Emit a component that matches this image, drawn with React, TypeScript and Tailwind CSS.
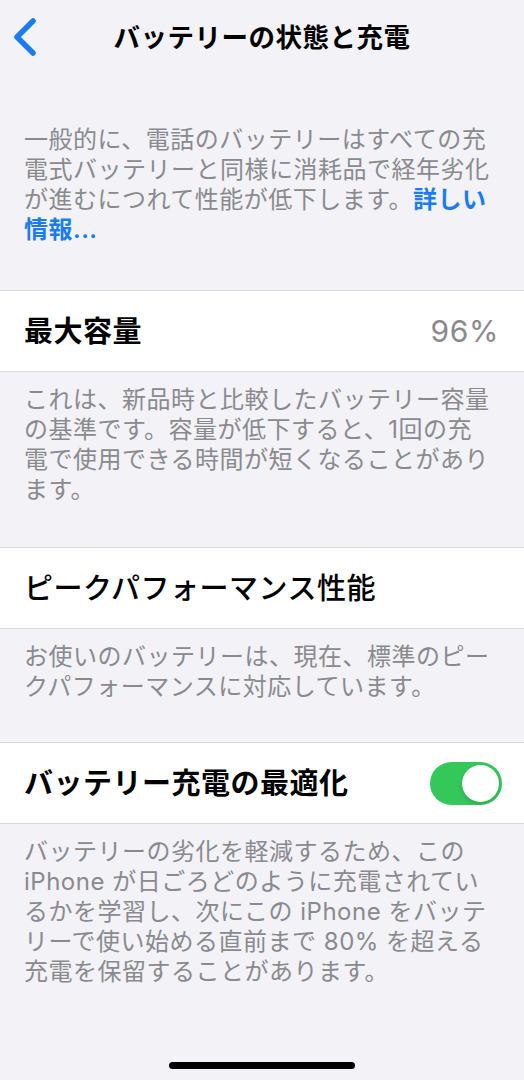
import React from "react";

const JP = { fontFamily: '"Inter", "Noto Sans CJK JP", sans-serif' };

function Row({ label, weight, right }: { label: string; weight: string; right?: React.ReactNode }) {
  return (
    <div className="flex h-[82px] items-center justify-between border-y border-[#d9d9de] bg-white pl-6 pr-[22px]">
      <span className={`text-[29px] leading-none tracking-[0.5px] text-black ${weight}`}>{label}</span>
      {right}
    </div>
  );
}

function Footer({ children, pb }: { children: React.ReactNode; pb: string }) {
  return (
    <div className={`pl-6 pr-[30px] pt-[13px] ${pb}`}>
      <p className="text-[24px] leading-[30px] tracking-[0.5px] text-[#8a8a8e]">{children}</p>
    </div>
  );
}

export default function App() {
  return (
    <div className="flex h-[1080px] w-[524px] flex-col overflow-hidden bg-[#f2f2f7]" style={JP}>
      <div className="grid h-[74px] grid-cols-[1fr_auto_1fr] items-center">
        <div className="flex items-center pl-[12px]">
          <svg width="26" height="38" viewBox="0 0 26 38" fill="none">
            <polyline
              points="21,3 5,19 21,35"
              stroke="#1a7cf2"
              strokeWidth="5.5"
              strokeLinecap="round"
              strokeLinejoin="round"
            />
          </svg>
        </div>
        <h1 className="text-[26.5px] font-bold leading-none tracking-[0.5px] text-black">バッテリーの状態と充電</h1>
        <div />
      </div>

      <div className="pl-6 pr-[30px] pt-[51px] pb-[45px]">
        <p className="text-[24px] leading-[30px] tracking-[0.5px] text-[#8a8a8e]">
          一般的に、電話のバッテリーはすべての充電式バッテリーと同様に消耗品で経年劣化が進むにつれて性能が低下します。
          <span className="font-semibold text-[#1a7cf2]">詳しい情報...</span>
        </p>
      </div>

      <Row
        label="最大容量"
        weight="font-semibold"
        right={<span className="pr-[3px] text-[30px] leading-none tracking-[0.6px] text-[#8a8a8e]">96%</span>}
      />
      <Footer pb="pb-[42px]">
        これは、新品時と比較したバッテリー容量の基準です。容量が低下すると、1回の充電で使用できる時間が短くなることがあります。
      </Footer>

      <Row label="ピークパフォーマンス性能" weight="font-medium" />
      <Footer pb="pb-[40px]">
        お使いのバッテリーは、現在、標準のピークパフォーマンスに対応しています。
      </Footer>

      <Row
        label="バッテリー充電の最適化"
        weight="font-semibold"
        right={
          <div className="flex h-[43px] w-[72px] items-center justify-end rounded-full bg-[#34c759] p-[3px]">
            <div className="h-[37px] w-[37px] rounded-full bg-white shadow-[0_2px_4px_rgba(0,0,0,0.15)]" />
          </div>
        }
      />
      <Footer pb="pb-0">
        バッテリーの劣化を軽減するため、この iPhone が日ごろどのように充電されているかを学習し、次にこの iPhone をバッテリーで使い始める直前まで 80% を超える充電を保留することがあります。
      </Footer>

      <div className="mt-auto mb-[11px] flex justify-center">
        <div className="h-[7px] w-[186px] rounded-full bg-black" />
      </div>
    </div>
  );
}
